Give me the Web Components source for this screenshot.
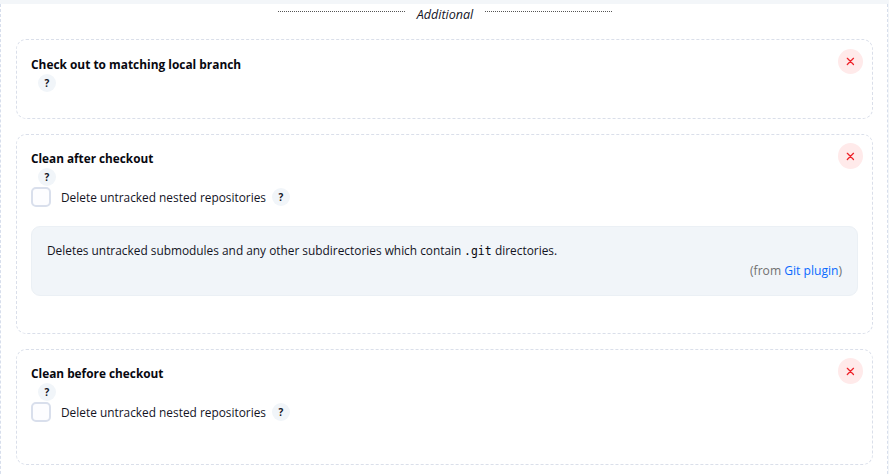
<!DOCTYPE html>
<html lang="en"><head><meta charset="utf-8"><title>Additional behaviours</title>
<style>
body{margin:0;background:#f3f6f9;height:474px;overflow:hidden;color:#14141f;font:13px/20px "Open Sans","Noto Sans",sans-serif}
</style></head><body>
<behaviour-panel>
<section-divider slot="title">Additional</section-divider>
<behaviour-card style="--h:80px;--narrow:.915" heading="Check out to matching local branch"></behaviour-card>
<behaviour-card style="--h:200px;--top:8px;--button:26px;--narrow:.905" heading="Clean after checkout">
<check-option>Delete untracked nested repositories</check-option>
<help-note><span>Deletes untracked submodules and any other subdirectories which contain</span><code slot="code">.git</code><span slot="end">directories.</span></help-note>
</behaviour-card>
<behaviour-card style="--h:116px;--top:8px;--button:26px;--narrow:.91" heading="Clean before checkout">
<check-option>Delete untracked nested repositories</check-option>
</behaviour-card>
</behaviour-panel>
<script>
function define(name, html, setup) {
  customElements.define(name, class extends HTMLElement {
    constructor() {
      super();
      this.attachShadow({mode: 'open'}).innerHTML = html;
    }
    connectedCallback() { if (setup) setup(this, this.shadowRoot); }
  });
}
define('behaviour-panel', `<style>
:host{display:block;box-sizing:border-box;width:888px;height:490px;margin-top:4px;padding:0 14px 0 15px;background:#fff;border:1px dashed #d7deec;border-top:0}
</style><slot name="title"></slot><slot></slot>`);
define('section-divider', `<style>
:host{display:flex;justify-content:center;height:35px;font-style:italic;line-height:21px}
i{width:127px;height:0;border-top:1px dotted #555;margin-top:7px}
span{width:80px;text-align:center;transform:scaleX(.965)}
</style><i></i><span><slot></slot></span><i></i>`);
define('help-button', `<style>
:host{display:flex;width:18px;height:18px;border-radius:50%;background:#f1f5f9;align-items:center;justify-content:center;font-size:10px;font-weight:700;line-height:18px;color:#14141f;flex:none}
</style>?`);
define('remove-button', `<style>
:host{display:flex;width:25px;height:var(--button,25px);border-radius:50%;background:#ffeaea;align-items:center;justify-content:center}
svg{display:block;margin-right:1px}
</style><svg width="9" height="9" viewBox="0 0 9 9"><path d="M1.3 1.3l6.2 6.2M7.5 1.3L1.3 7.5" stroke="#ee2229" stroke-width="1.25" stroke-linecap="round"/></svg>`);
define('behaviour-card', `<style>
:host{display:block;box-sizing:border-box;height:var(--h);margin-bottom:15px;padding:var(--top,9px) 9px 0 14px;border:1px dashed #dadfea;border-radius:10px}
header{display:flex;justify-content:space-between;height:25px}
b{color:#08080f;line-height:20px;margin-top:5px;white-space:nowrap;transform:scaleX(var(--narrow));transform-origin:0 0}
help-button{margin-left:7px}
</style><header><b></b><remove-button></remove-button></header><help-button></help-button><slot></slot>`,
(el, root) => { root.querySelector('b').textContent = el.getAttribute('heading'); });
define('check-option', `<style>
:host{display:flex;height:20px;align-items:center;margin-top:1px}
i{box-sizing:border-box;width:20px;height:20px;border:2px solid #d9dfec;border-radius:5px;background:#fdfdff;margin-right:10px;flex:none}
span{width:211px;white-space:nowrap}
b{display:inline-block;font-weight:400;transform:scaleX(.913);transform-origin:0 0}
</style><i></i><span><b><slot></slot></b></span><help-button></help-button>`);
define('help-note', `<style>
:host{display:block;box-sizing:border-box;width:827px;height:70px;margin-top:19px;padding:13px 15px;border:1px solid #ebf0f5;border-radius:9px;background:#f1f5f9}
div{display:flex;white-space:nowrap}
.m{width:417px}.c{width:31px}
b{display:inline-block;font-weight:400;transform:scaleX(.913);transform-origin:0 0}
::slotted(code){font:11.5px/20px "DejaVu Sans Mono",monospace;color:#08080f}
p{margin:0;line-height:18px;text-align:right;color:#707070;transform:scaleX(.93);transform-origin:100% 0}
a{color:#0b6aff}
</style><div><span class="m"><b><slot></slot></b></span><span class="c"><slot name="code"></slot></span><b><slot name="end"></slot></b></div><p>(from <a>Git plugin</a>)</p>`);
</script></body></html>
